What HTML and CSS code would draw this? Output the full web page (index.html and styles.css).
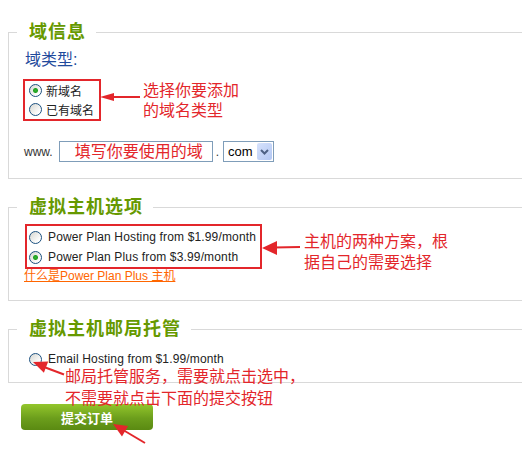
FILE: index.html
```html
<!DOCTYPE html>
<html lang="zh-CN">
<head>
    <meta charset="UTF-8">
    <meta name="viewport" content="width=device-width, initial-scale=1.0">
    <title>订购虚拟主机</title>
    <link rel="stylesheet" href="styles.css">
</head>
<body>
    <div class="page">
        <fieldset class="group">
            <legend>域信息</legend>
            <div class="type-label">域类型:</div>
            <div class="choices domain-types">
                <label class="radio-row"><input type="radio" name="domainType" checked>新域名</label>
                <label class="radio-row"><input type="radio" name="domainType">已有域名</label>
            </div>
            <div class="domain-row">
                <span class="www">www.</span>
                <span class="domain-input">填写你要使用的域</span>
                <span class="dot">.</span>
                <span class="select-box">
                    com
                    <span class="select-btn">
                        <svg width="15" height="17" viewBox="0 0 15 17" aria-hidden="true">
                            <polyline points="4,7 7.5,10.5 11,7" fill="none" stroke="#4d6185" stroke-width="2"/>
                        </svg>
                    </span>
                </span>
            </div>
        </fieldset>

        <fieldset class="group plans-group">
            <legend>虚拟主机选项</legend>
            <div class="choices plans">
                <label class="radio-row"><input type="radio" name="plan">Power Plan Hosting from $1.99/month</label>
                <label class="radio-row"><input type="radio" name="plan" checked>Power Plan Plus from $3.99/month</label>
            </div>
            <a class="plan-link" href="#">什么是Power Plan Plus 主机</a>
        </fieldset>

        <fieldset class="group mail-group">
            <legend>虚拟主机邮局托管</legend>
            <label class="radio-row mail-row"><input type="radio" name="mail">Email Hosting from $1.99/month</label>
        </fieldset>

        <button class="submit" type="button">提交订单</button>

        <!-- annotations -->
        <div class="note note-type">选择你要添加<br>的域名类型</div>
        <div class="note note-plan">主机的两种方案，根<br>据自己的需要选择</div>
        <div class="note note-mail">邮局托管服务，需要就点击选中，<br>不需要就点击下面的提交按钮</div>

        <svg class="arrows" width="522" height="453" viewBox="0 0 522 453" aria-hidden="true">
            <g fill="#e3262b" stroke="#e3262b">
                <line x1="140" y1="97" x2="110" y2="97" stroke-width="2"/>
                <polygon points="100,97 114,93 114,101" stroke="none"/>

                <line x1="300" y1="247" x2="274" y2="247.5" stroke-width="2"/>
                <polygon points="262,248 277,241 277,255" stroke="none"/>

                <line x1="44" y1="367" x2="64" y2="374.5" stroke-width="2"/>
                <polygon points="33,362 43.9,372.7 48.2,361.5" stroke="none"/>

                <line x1="124" y1="430.5" x2="145" y2="443" stroke-width="2"/>
                <polygon points="113,424 122,436.4 128.1,426" stroke="none"/>
            </g>
        </svg>
    </div>
</body>
</html>
```

FILE: styles.css
```css
body {
    margin: 0;
    background: #ffffff;
    font-family: "Liberation Sans", "Noto Sans CJK SC", sans-serif;
    color: #222222;
}

.page {
    position: relative;
    padding: 22px 0 0 8px;
    height: 431px;
    overflow: hidden;
}

/* Fieldsets */
.group {
    margin: 0;
    border: 1px solid #d9d9d9;
    border-right: none;
    padding: 0 0 16px 14px;
    min-width: 0;
}

.group + .group {
    margin-top: 18px;
}

.group legend {
    margin-left: -6px;
    padding: 0 10px 0 12px;
    font-size: 18px;
    line-height: 20px;
    font-weight: bold;
    letter-spacing: 1px;
    color: #669900;
}

.type-label {
    margin: 8px 0 0 2px;
    font-size: 16px;
    line-height: 20px;
    color: #1f4a9c;
}

/* Radio groups */
.choices {
    display: flex;
    flex-direction: column;
    width: fit-content;
    border: 2px solid #e3262b;
}

.domain-types {
    margin-top: 9px;
    padding: 0 5px 0 4px;
}

.radio-row {
    display: flex;
    align-items: center;
    gap: 4px;
    height: 19px;
    font-size: 12px;
    color: #222222;
}

.radio-row input {
    appearance: none;
    width: 13px;
    height: 13px;
    margin: 0;
    flex: none;
    border: 1px solid #1c5180;
    border-radius: 50%;
    background: linear-gradient(135deg, #d6d6d0, #ffffff 80%);
}

.radio-row input:checked {
    background: radial-gradient(circle, #33b233 0, #21a121 2px, rgba(33, 161, 33, 0) 3px),
                linear-gradient(135deg, #d6d6d0, #ffffff 80%);
}

/* Domain row */
.domain-row {
    display: flex;
    align-items: center;
    margin: 20px 0 0 1px;
    font-size: 12px;
    color: #333333;
}

.domain-input {
    box-sizing: border-box;
    width: 154px;
    height: 21px;
    margin-left: 6px;
    padding-left: 15px;
    border: 1px solid #7f9db9;
    font-size: 16px;
    line-height: 19px;
    color: #e3262b;
}

.dot {
    margin: 0 4px 0 3px;
}

.select-box {
    box-sizing: border-box;
    display: flex;
    align-items: center;
    justify-content: space-between;
    width: 51px;
    height: 21px;
    padding-left: 4px;
    border: 1px solid #7f9db9;
    font-size: 13px;
    color: #000000;
}

.select-btn {
    display: flex;
    width: 15px;
    height: 17px;
    margin-right: 1px;
    border-radius: 2px;
    background: linear-gradient(135deg, #d6e2fc, #b3c7f3);
}

/* Plans */
.plans {
    margin: 7px 0 0 2px;
    padding: 1px 4px 0 2px;
}

.plans .radio-row,
.mail-row {
    height: 20px;
    gap: 6px;
    letter-spacing: 0.15px;
}

.plan-link {
    display: block;
    width: fit-content;
    margin-left: 1px;
    font-size: 12px;
    line-height: 14px;
    color: #ff6600;
}

.plans-group {
    padding-bottom: 17px;
}

.mail-group {
    padding-bottom: 13px;
}

.mail-row {
    margin: 10px 0 0 6px;
}

/* Submit */
.submit {
    display: block;
    width: 132px;
    height: 26px;
    margin: 21px 0 0 13px;
    padding: 0;
    border: none;
    border-radius: 4px;
    background: linear-gradient(#93c62c, #6c9e1c 55%, #5a8a12);
    font-family: "Liberation Sans", "Noto Sans CJK SC", sans-serif;
    font-size: 13px;
    font-weight: bold;
    color: #ffffff;
    cursor: pointer;
}

/* Annotations */
.note {
    position: absolute;
    font-size: 16px;
    color: #e3262b;
    white-space: nowrap;
}

.note-type {
    left: 143px;
    top: 81px;
    line-height: 20px;
}

.note-plan {
    left: 304px;
    top: 231px;
    line-height: 21px;
}

.note-mail {
    left: 65px;
    top: 366px;
    line-height: 22px;
}

.arrows {
    position: absolute;
    left: 0;
    top: 0;
    pointer-events: none;
}
```
